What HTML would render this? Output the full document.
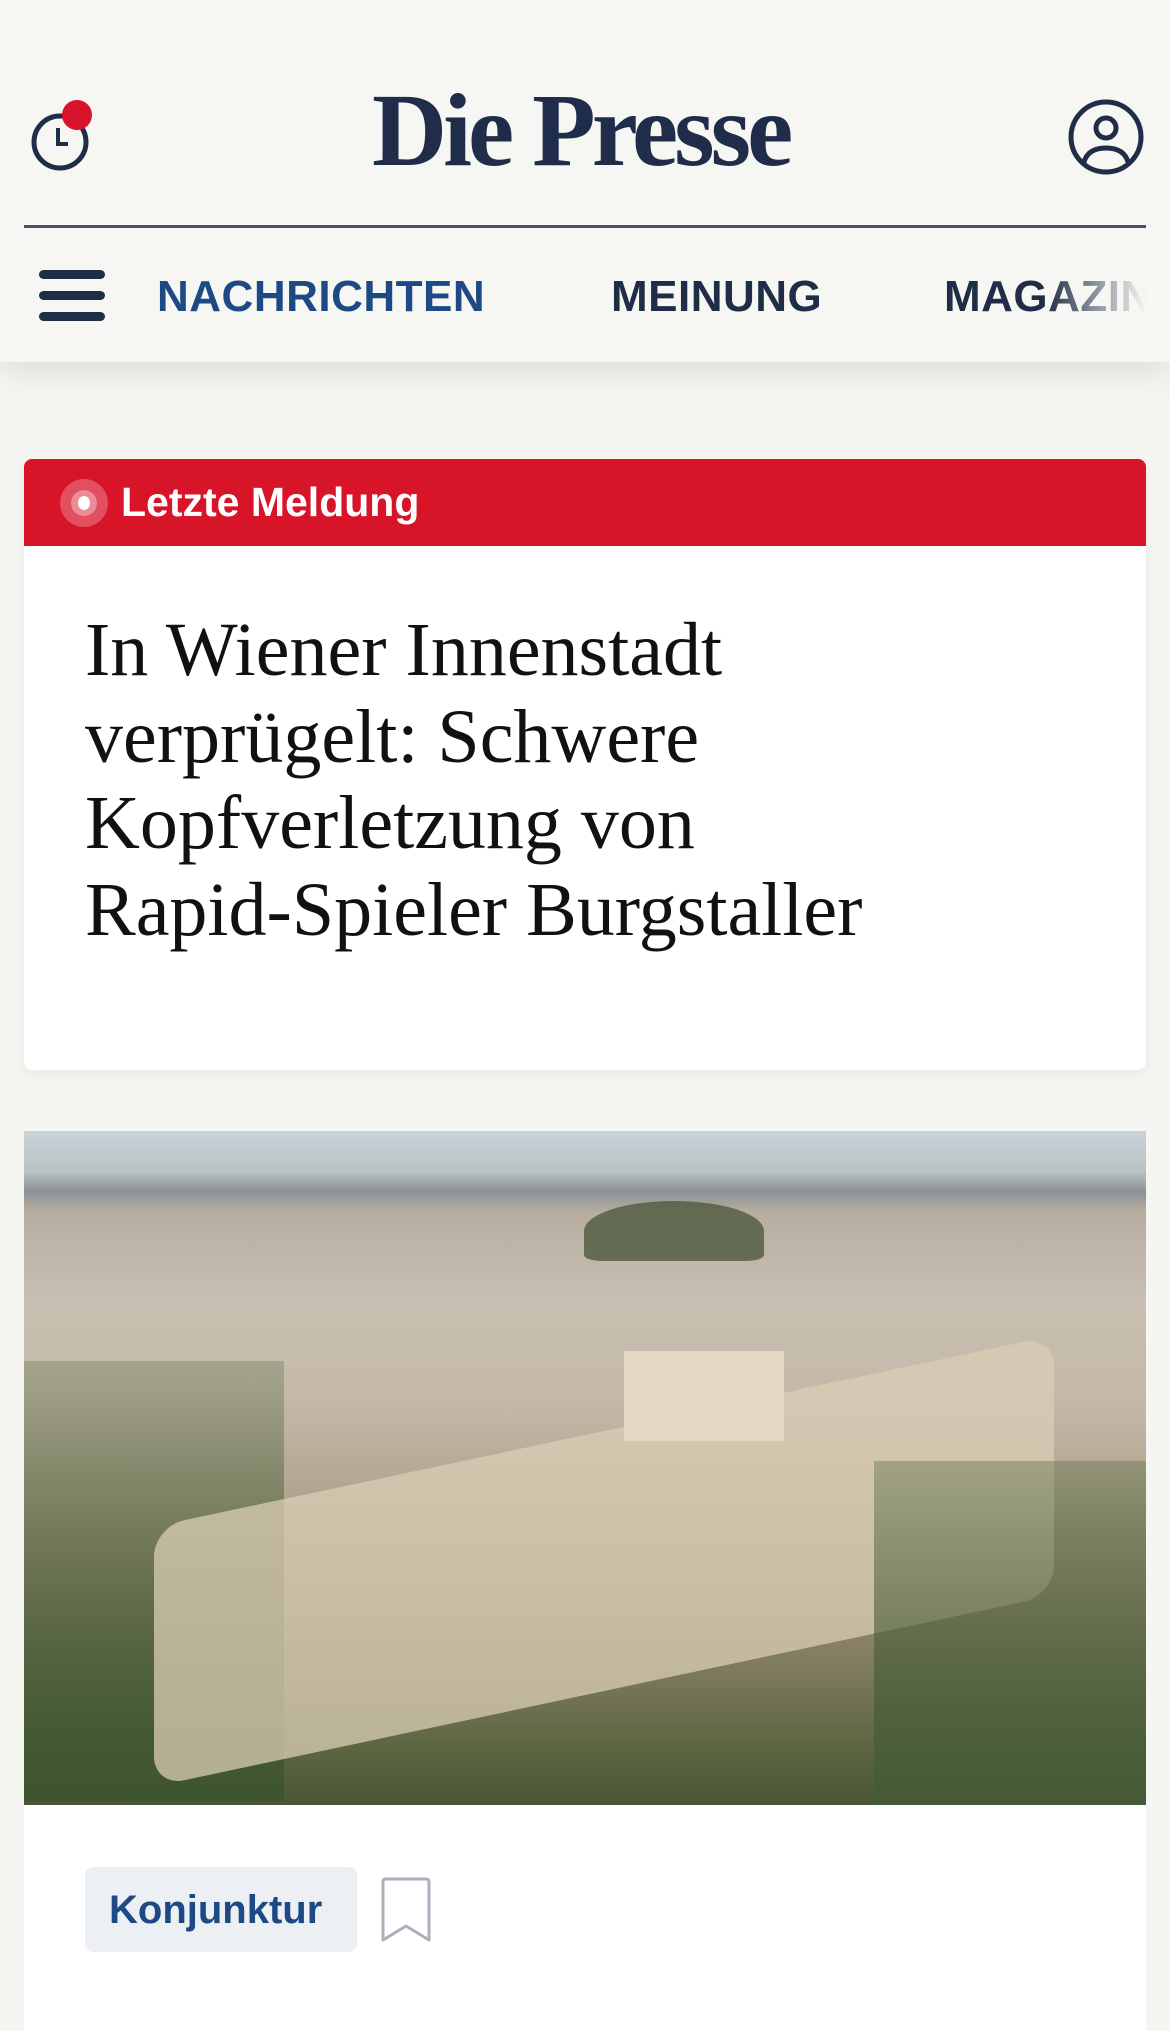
<!DOCTYPE html>
<html><head><meta charset="utf-8"><style>
*{margin:0;padding:0;box-sizing:border-box}
body{width:1170px;height:1992px;background:#f5f5f1;overflow:hidden;position:relative;font-family:"Liberation Sans",sans-serif}
.abs{position:absolute}
</style></head><body>
<div class="abs" style="left:0;top:0;width:1170px;height:362px;background:#f6f6f2;box-shadow:0 10px 30px rgba(0,0,0,0.10)"></div>
<svg class="abs" style="left:28px;top:96px" width="70" height="80" viewBox="0 0 70 80">
<circle cx="32" cy="46" r="26" fill="none" stroke="#1f2d47" stroke-width="5"/>
<path d="M30 32 V48 H40" fill="none" stroke="#1f2d47" stroke-width="4"/>
<circle cx="49" cy="19" r="15" fill="#d8122a"/>
</svg>
<div class="abs" style="left:372px;top:76px;height:110px;font-family:'Liberation Serif',serif;font-weight:bold;font-size:104px;color:#1f2d4a;letter-spacing:-4px;white-space:nowrap;line-height:110px">Die Presse</div>
<svg class="abs" style="left:1066px;top:98px" width="80" height="78" viewBox="0 0 80 78">
<circle cx="40" cy="39" r="35" fill="none" stroke="#1f2d47" stroke-width="5"/>
<circle cx="40" cy="30" r="10" fill="none" stroke="#1f2d47" stroke-width="5"/>
<path d="M18 64 Q22 50 40 50 Q58 50 62 64" fill="none" stroke="#1f2d47" stroke-width="5"/>
</svg>
<div class="abs" style="left:24px;top:225px;width:1122px;height:3px;background:#4b5068"></div>
<div class="abs" style="left:39px;top:270px;width:66px;height:9px;border-radius:5px;background:#1f2d47"></div>
<div class="abs" style="left:39px;top:291px;width:66px;height:9px;border-radius:5px;background:#1f2d47"></div>
<div class="abs" style="left:39px;top:312px;width:66px;height:9px;border-radius:5px;background:#1f2d47"></div>
<div class="abs" style="left:157px;top:272px;font-size:44px;font-weight:bold;color:#1d4a85;letter-spacing:0.5px;line-height:50px">NACHRICHTEN</div>
<div class="abs" style="left:611px;top:272px;font-size:44px;font-weight:bold;color:#1f2d47;letter-spacing:0.5px;line-height:50px">MEINUNG</div>
<div class="abs" style="left:944px;top:272px;width:202px;overflow:hidden;white-space:nowrap;font-size:44px;font-weight:bold;color:#1f2d47;letter-spacing:0.5px;line-height:50px;-webkit-mask-image:linear-gradient(90deg,#000 50%,transparent)">MAGAZIN</div>
<div class="abs" style="left:24px;top:459px;width:1122px;height:611px;background:#fff;border-radius:8px;overflow:hidden;box-shadow:0 4px 14px rgba(0,0,0,0.06)">
<div style="height:87px;background:#d81429;position:relative">
<div class="abs" style="left:36px;top:20px;width:48px;height:48px;border-radius:50%;background:rgba(255,255,255,0.25)"></div>
<div class="abs" style="left:47px;top:31px;width:26px;height:26px;border-radius:50%;background:rgba(255,255,255,0.35)"></div>
<div class="abs" style="left:54px;top:37px;width:12px;height:14px;border-radius:50%;background:#fff"></div>
<div class="abs" style="left:97px;top:18px;font-size:41px;font-weight:bold;color:#fff;line-height:50px">Letzte Meldung</div>
</div>
<div style="position:absolute;left:61px;top:148px;width:1040px;white-space:nowrap;font-family:'Liberation Serif',serif;font-size:76px;line-height:86.5px;color:#111">In Wiener Innenstadt<br>verprügelt: Schwere<br>Kopfverletzung von<br>Rapid&#8209;Spieler Burgstaller</div>
</div>
<div class="abs" style="left:24px;top:1131px;width:1122px;height:900px;background:#fff;overflow:hidden">
<div style="position:relative;height:674px;background:linear-gradient(180deg,#c9d3d8 0%,#b9c2c4 6%,#8b9294 9%,#b7ada0 12%,#c8bfb2 25%,#c4b9a8 40%,#b0a38e 55%,#9b8d78 68%,#7d7a5c 80%,#5b6540 92%,#4b5636 100%)">
<div class="abs" style="left:560px;top:70px;width:180px;height:60px;background:#4f5a3e;border-radius:50% 50% 10% 10%;opacity:.8"></div>
<div class="abs" style="left:0;top:230px;width:260px;height:440px;background:linear-gradient(180deg,rgba(90,110,70,.3),rgba(60,85,45,.9))"></div>
<div class="abs" style="left:130px;top:300px;width:900px;height:260px;background:#d9cdb6;transform:skewY(-12deg);opacity:.75;border-radius:30px"></div>
<div class="abs" style="left:600px;top:220px;width:160px;height:90px;background:#e3d8c2"></div>
<div class="abs" style="left:850px;top:330px;width:272px;height:344px;background:linear-gradient(180deg,rgba(90,110,70,.4),rgba(70,90,55,.9))"></div>
</div>
<div class="abs" style="left:61px;top:736px;width:272px;height:85px;background:#ecf0f5;border-radius:8px"></div>
<div class="abs" style="left:85px;top:755px;font-size:40px;font-weight:bold;color:#1d4a85;line-height:48px">Konjunktur</div>
<svg class="abs" style="left:356px;top:745px" width="52" height="68" viewBox="0 0 52 68">
<path d="M3 64 V6 Q3 3 6 3 H46 Q49 3 49 6 V64 L26 50 Z" fill="none" stroke="#aab1bd" stroke-width="3" stroke-linejoin="round"/>
</svg>
</div>
</body></html>
